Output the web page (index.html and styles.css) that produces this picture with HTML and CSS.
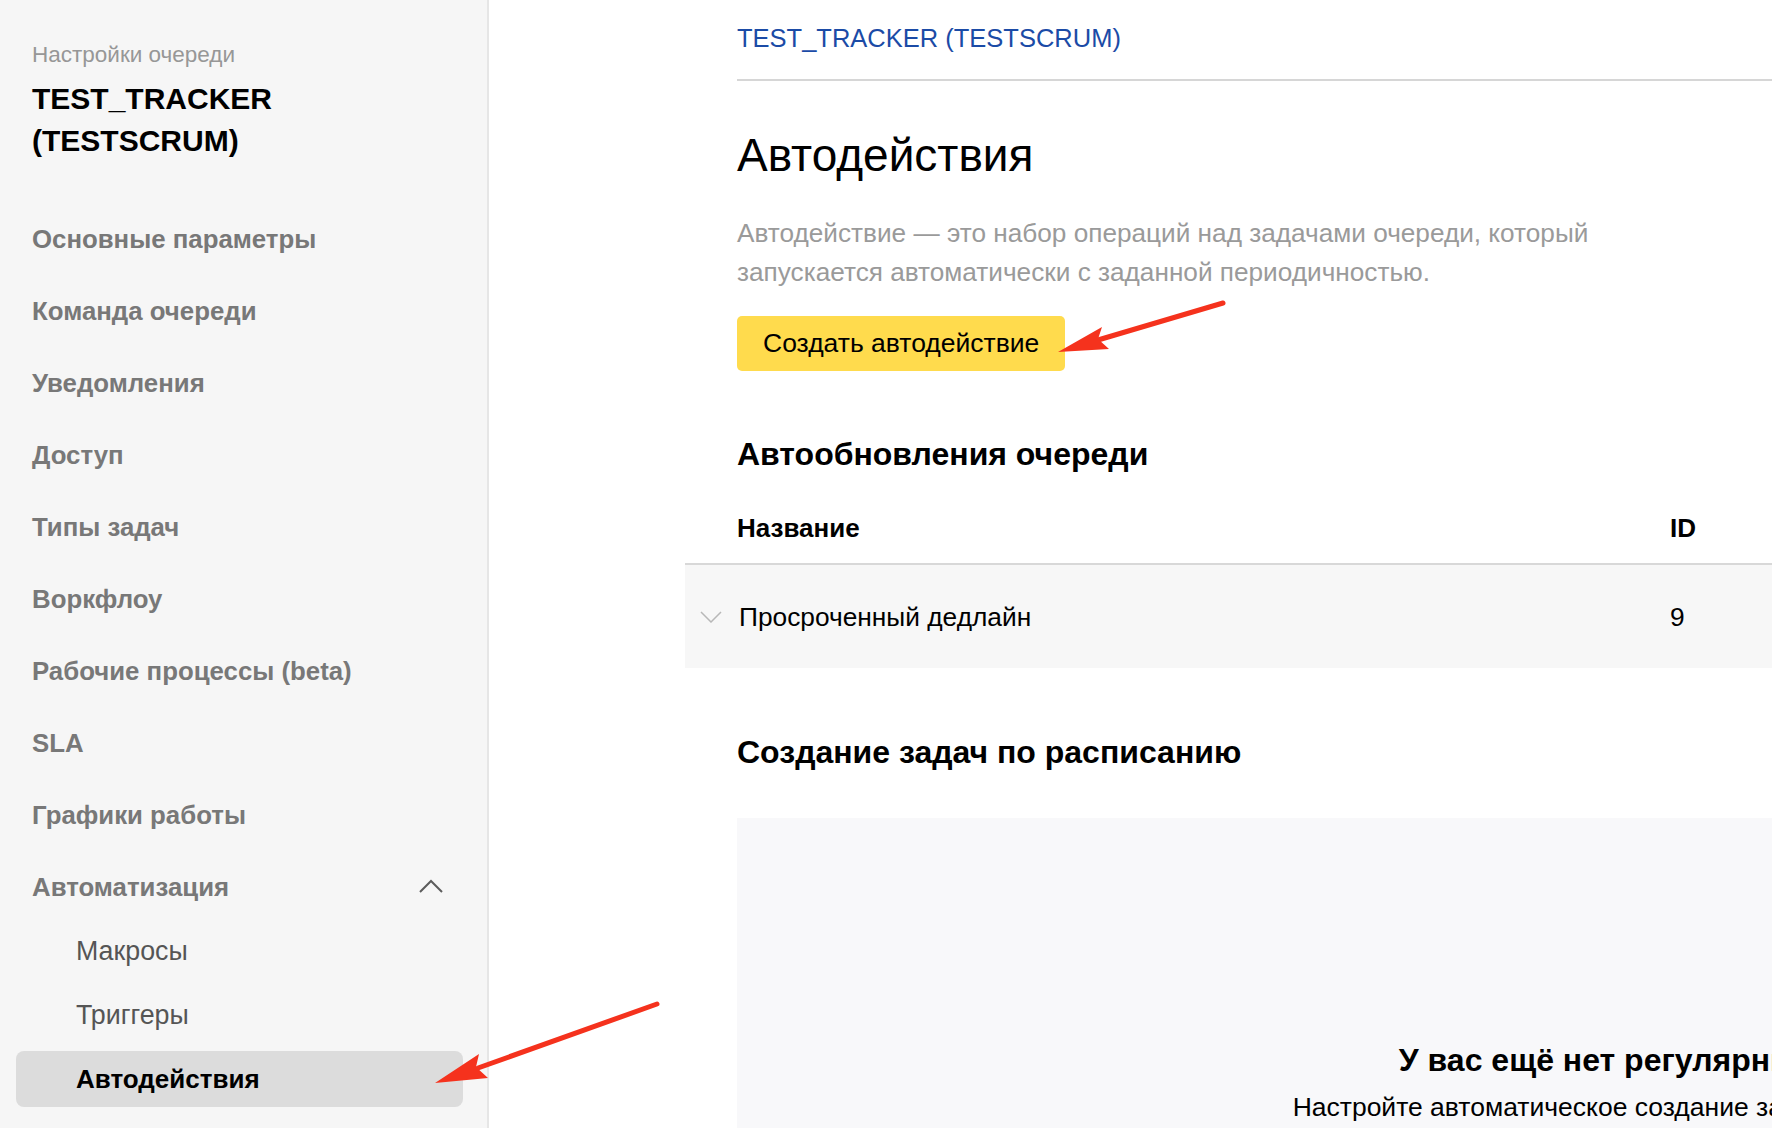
FILE: index.html
```
<!DOCTYPE html>
<html lang="ru">
<head>
    <meta charset="UTF-8">
    <meta name="viewport" content="width=device-width, initial-scale=1.0">
    <title>Автодействия — Настройки очереди</title>
    <link rel="stylesheet" href="styles.css">
</head>
<body>

<div class="page">
    <!-- Боковое меню настроек очереди -->
    <aside class="sidebar">
        <div class="sidebar-caption">Настройки очереди</div>
        <div class="sidebar-title">TEST_TRACKER<br>(TESTSCRUM)</div>

        <nav class="nav">
            <a href="#" class="nav-item">Основные параметры</a>
            <a href="#" class="nav-item">Команда очереди</a>
            <a href="#" class="nav-item">Уведомления</a>
            <a href="#" class="nav-item">Доступ</a>
            <a href="#" class="nav-item">Типы задач</a>
            <a href="#" class="nav-item">Воркфлоу</a>
            <a href="#" class="nav-item">Рабочие процессы (beta)</a>
            <a href="#" class="nav-item">SLA</a>
            <a href="#" class="nav-item">Графики работы</a>
            <a href="#" class="nav-item nav-group">
                Автоматизация
                <svg class="chevron-up" width="24" height="14" viewBox="0 0 24 14">
                    <path d="M1 13 L12 2 L23 13" fill="none" stroke="#5c5c5c" stroke-width="2"/>
                </svg>
            </a>
            <div class="subnav">
                <a href="#" class="subnav-item">Макросы</a>
                <a href="#" class="subnav-item">Триггеры</a>
                <a href="#" class="subnav-item active">Автодействия</a>
            </div>
        </nav>
    </aside>

    <!-- Основная часть -->
    <main class="main">
        <div class="content">
            <div class="breadcrumbs">
                <a href="#">TEST_TRACKER (TESTSCRUM)</a>
            </div>

            <h1>Автодействия</h1>
            <p class="lead">Автодействие — это набор операций над задачами очереди, который запускается автоматически с заданной периодичностью.</p>
            <button class="btn-create">Создать автодействие</button>

            <h2>Автообновления очереди</h2>
            <div class="table">
                <div class="table-head">
                    <div></div>
                    <div>Название</div>
                    <div>ID</div>
                </div>
                <div class="table-row">
                    <div class="row-toggle">
                        <svg width="22" height="12" viewBox="0 0 22 12">
                            <path d="M1 1 L11 11 L21 1" fill="none" stroke="#b8b8b8" stroke-width="1.5"/>
                        </svg>
                    </div>
                    <div class="row-name">Просроченный дедлайн</div>
                    <div>9</div>
                </div>
            </div>

            <h2 class="section-schedule">Создание задач по расписанию</h2>
            <div class="empty">
                <h3>У вас ещё нет регулярных задач</h3>
                <p>Настройте автоматическое создание задач по расписанию</p>
            </div>
        </div>
    </main>

    <!-- Стрелки-подсказки поверх скриншота -->
    <svg class="annotations" width="1772" height="1128" viewBox="0 0 1772 1128">
        <line x1="1223" y1="303" x2="1098" y2="340" stroke="#f5321d" stroke-width="5" stroke-linecap="round"/>
        <polygon points="1058,352 1102,327 1098,339 1109,349" fill="#f5321d"/>
        <line x1="657" y1="1004" x2="478" y2="1068" stroke="#f5321d" stroke-width="5" stroke-linecap="round"/>
        <polygon points="435,1083 479,1054 476,1067 488,1078" fill="#f5321d"/>
    </svg>
</div>

</body>
</html>
```

FILE: styles.css
```
/* Общие стили */
* {
    margin: 0;
    padding: 0;
    box-sizing: border-box;
}

html, body {
    height: 100%;
}

body {
    font-family: 'Liberation Sans', Arial, sans-serif;
    color: #000;
    background-color: #fff;
    overflow: hidden;
}

a {
    text-decoration: none;
    color: inherit;
}

.page {
    position: relative;
    display: flex;
    min-height: 100vh;
}

/* Боковое меню */
.sidebar {
    flex-shrink: 0;
    width: 489px;
    min-height: 100vh;
    background-color: #f6f6f6;
    border-right: 2px solid #e6e6e6;
    padding-top: 42px;
}

.sidebar-caption {
    padding-left: 32px;
    font-size: 22.5px;
    line-height: 26px;
    color: #979797;
}

.sidebar-title {
    margin-top: 10px;
    padding-left: 32px;
    font-size: 30px;
    line-height: 42px;
    font-weight: bold;
}

.nav {
    margin-top: 41px;
    display: flex;
    flex-direction: column;
}

.nav-item {
    display: flex;
    align-items: center;
    justify-content: space-between;
    height: 72px;
    padding: 0 44px 0 32px;
    font-size: 25.8px;
    font-weight: bold;
    color: #787878;
}

.chevron-up {
    margin-top: -2px;
}

.subnav {
    display: flex;
    flex-direction: column;
    gap: 8px;
    padding: 0 24px 0 16px;
}

.subnav-item {
    display: flex;
    align-items: center;
    height: 56px;
    padding-left: 60px;
    border-radius: 8px;
    font-size: 26.8px;
    color: #555;
}

.subnav-item.active {
    background-color: #dcdcdc;
    color: #000;
    font-size: 26px;
    font-weight: bold;
}

/* Основная часть */
.main {
    flex-shrink: 0;
    padding-left: 248px;
}

.content {
    width: 1838px;
}

.breadcrumbs {
    padding: 23px 0 26px;
    border-bottom: 2px solid #d6d6d6;
    font-size: 25.5px;
    line-height: 30px;
}

.breadcrumbs a {
    color: #1b4ba6;
}

h1 {
    margin-top: 46px;
    font-size: 46px;
    line-height: 56px;
    font-weight: normal;
}

.lead {
    margin-top: 31px;
    max-width: 980px;
    font-size: 26.2px;
    line-height: 39px;
    color: #9a9a9a;
}

.btn-create {
    margin-top: 24px;
    height: 55px;
    padding: 0 26px;
    border: none;
    border-radius: 5px;
    background-color: #ffdb4d;
    font-family: inherit;
    font-size: 26.5px;
    color: #000;
    cursor: pointer;
}

h2 {
    margin-top: 65px;
    font-size: 32px;
    line-height: 36px;
    font-weight: bold;
}

h2.section-schedule {
    margin-top: 66px;
}

/* Таблица автообновлений */
.table {
    margin-left: -52px;
    font-size: 26px;
    line-height: 30px;
}

.table-head,
.table-row {
    display: grid;
    grid-template-columns: 52px 933px 1fr;
    align-items: center;
}

.table-head {
    padding: 41px 0 20px;
    border-bottom: 2px solid #d8d8d8;
    font-weight: bold;
}

.table-row {
    padding: 37px 0 36px;
    background-color: #f7f7f7;
    font-size: 26.3px;
}

.row-name {
    padding-left: 2px;
}

.row-toggle {
    display: flex;
    justify-content: center;
}

/* Пустое состояние */
.empty {
    margin-top: 48px;
    height: 400px;
    padding-top: 222px;
    background-color: #f8f8fa;
    text-align: center;
}

.empty h3 {
    font-size: 32px;
    line-height: 40px;
    font-weight: bold;
}

.empty p {
    margin-top: 11px;
    font-size: 26.5px;
    line-height: 32px;
}

/* Стрелки */
.annotations {
    position: absolute;
    top: 0;
    left: 0;
    pointer-events: none;
}
```
